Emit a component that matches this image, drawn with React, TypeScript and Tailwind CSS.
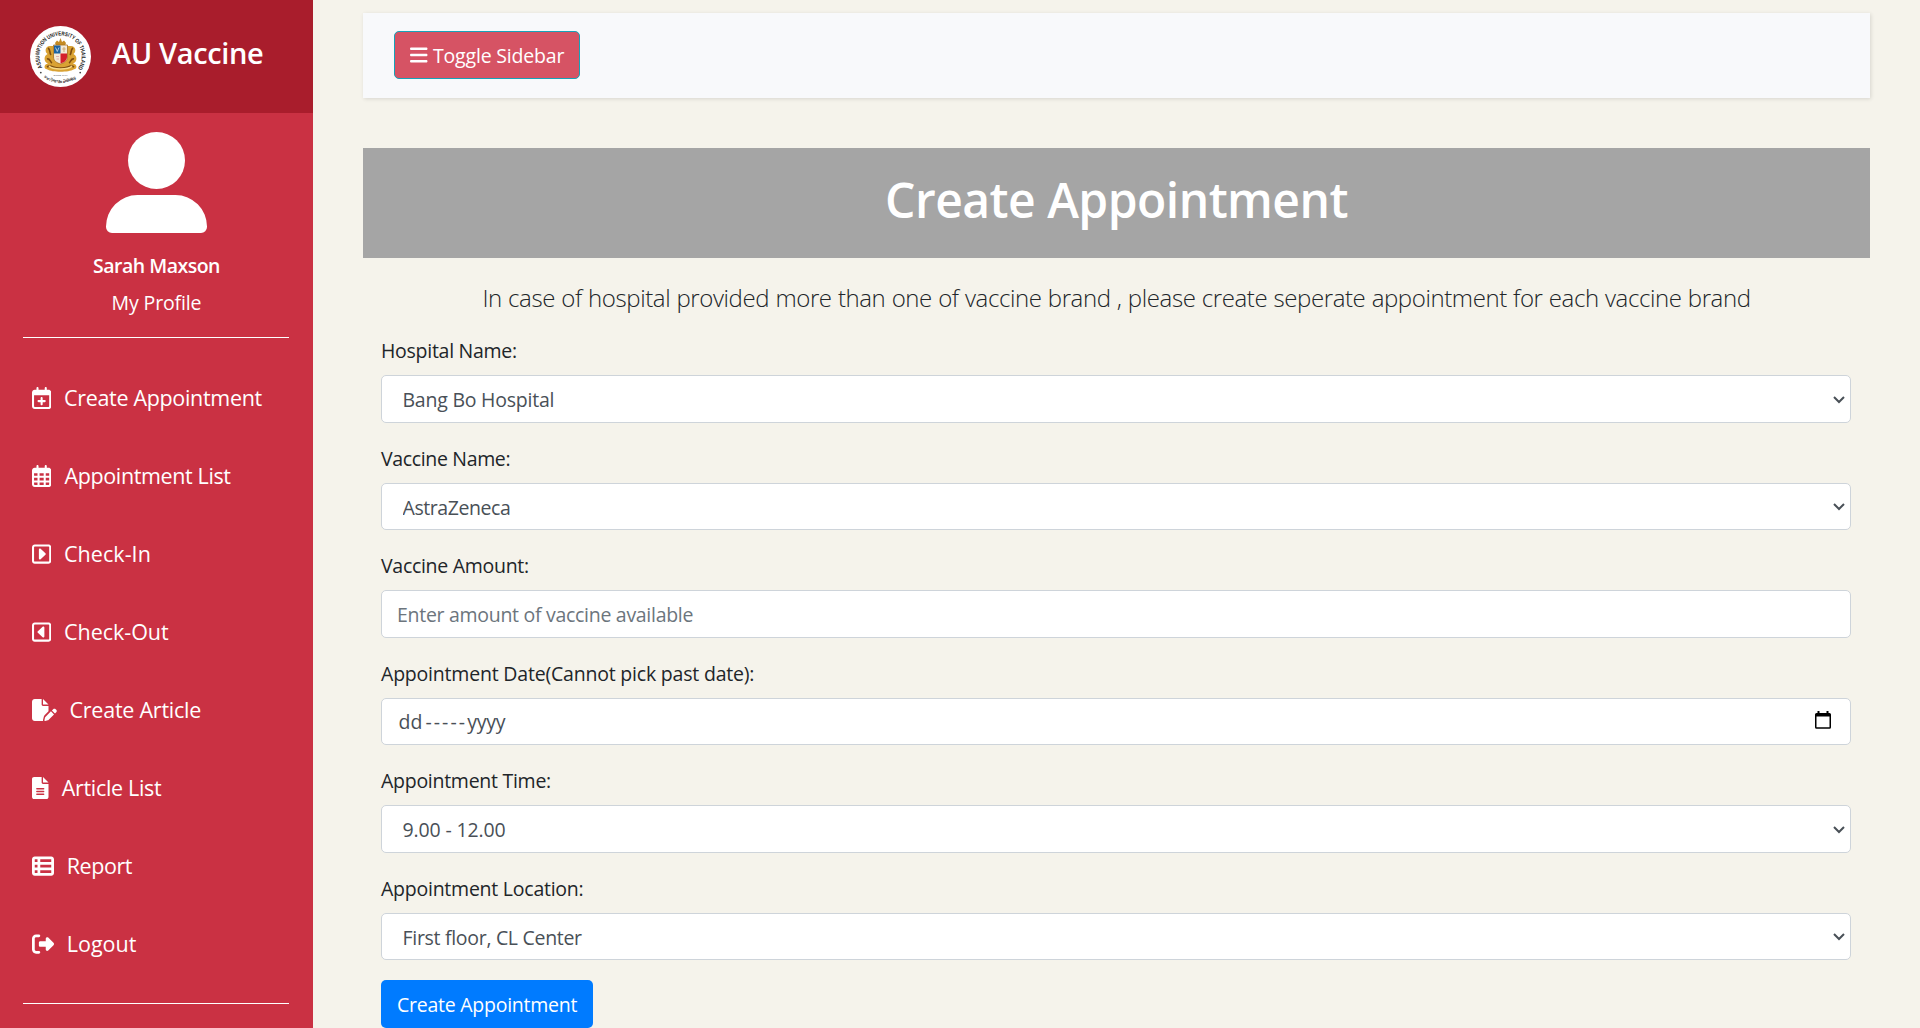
import type { ComponentType, ReactNode } from "react";
import {
  FaBars,
  FaFilePen,
  FaRegCalendarDays,
  FaRegCalendarPlus,
  FaRegSquareCaretLeft,
  FaRegSquareCaretRight,
  FaRightFromBracket,
  FaTableList,
} from "react-icons/fa6";

type NavItem = {
  label: string;
  icon: ComponentType<{ className?: string }>;
  iconWidth: string;
  tracking: string;
  gap: string;
};

function FileLines({ className }: { className?: string }) {
  return (
    <svg viewBox="0 0 384 512" className={className} fill="currentColor">
      <path d="M256 0v128h128L256 0z" />
      <path
        fillRule="evenodd"
        d="M224 128V0H48C21.5 0 0 21.5 0 48v416c0 26.5 21.5 48 48 48h288c26.500 0 48-21.500 48-48V160H256c-17.700 0-32-14.300-32-32z M112 256h160a16 16 0 0 1 0 32H112a16 16 0 0 1 0-32z M112 320h160a16 16 0 0 1 0 32H112a16 16 0 0 1 0-32z M112 384h160a16 16 0 0 1 0 32H112a16 16 0 0 1 0-32z"
      />
    </svg>
  );
}

const navItems: NavItem[] = [
  { label: "Create Appointment", icon: FaRegCalendarPlus, iconWidth: "w-[19.25px]", tracking: "tracking-[-0.32px]", gap: "gap-[12.75px]" },
  { label: "Appointment List", icon: FaRegCalendarDays, iconWidth: "w-[19.25px]", tracking: "tracking-[-0.37px]", gap: "gap-[13.25px]" },
  { label: "Check-In", icon: FaRegSquareCaretRight, iconWidth: "w-[19.25px]", tracking: "tracking-[0.05px]", gap: "gap-[12.75px]" },
  { label: "Check-Out", icon: FaRegSquareCaretLeft, iconWidth: "w-[19.25px]", tracking: "tracking-[-0.03px]", gap: "gap-[12.75px]" },
  { label: "Create Article", icon: FaFilePen, iconWidth: "w-[24.75px]", tracking: "tracking-[-0.24px]", gap: "gap-[12.75px]" },
  { label: "Article List", icon: FileLines, iconWidth: "w-[16.5px]", tracking: "tracking-[-0.32px]", gap: "gap-[13.25px]" },
  { label: "Report", icon: FaTableList, iconWidth: "w-[22px]", tracking: "tracking-[-0.44px]", gap: "gap-[12.75px]" },
  { label: "Logout", icon: FaRightFromBracket, iconWidth: "w-[22px]", tracking: "tracking-[0.01px]", gap: "gap-[12.75px]" },
];

function UniversitySeal() {
  return (
    <svg viewBox="0 0 61 61" className="mt-[26px] h-[61px] w-[61px] shrink-0">
      <defs>
        <path id="seal-top" d="M12.4 41.4 A21.1 21.1 0 1 1 48.6 41.4" />
        <path id="seal-bottom" d="M14.5 51.4 A26.4 26.4 0 0 0 46.5 51.4" />
      </defs>
      <circle cx="30.5" cy="30.5" r="30.5" fill="#fff" />
      <text fontFamily="Liberation Sans" fontWeight="700" fontSize="5.8" fill="#222">
        <textPath href="#seal-top" textLength="90" lengthAdjust="spacingAndGlyphs">
          ASSUMPTION UNIVERSITY OF THAILAND
        </textPath>
      </text>
      <text fontFamily="Liberation Sans, Noto Sans, sans-serif" fontWeight="700" fontSize="3.6" fill="#333">
        <textPath href="#seal-bottom" textLength="33" lengthAdjust="spacingAndGlyphs">
          มหาวิทยาลัยอัสสัมชัญ
        </textPath>
      </text>
      <circle cx="10.8" cy="46.6" r="0.9" fill="#444" />
      <circle cx="50.2" cy="46.6" r="0.9" fill="#444" />
      <path d="M25 17 L27 14.5 L29 16 L30.5 12 L32 16 L34 14.5 L36 17 L35 19.5 H26 Z" fill="#c58b22" />
      <path d="M20 20 C15 20 14.5 26 17.5 28 C13.5 30 13.5 36 18 37.5 C14 38 13 43 17.5 43.5 C22 46.5 39 46.5 43.5 43.5 C48 43 47 38 43 37.5 C47.5 36 47.5 30 43.5 28 C46.5 26 46 20 41 20 Z" fill="#d9a233" />
      <path d="M18 22 C21 24 19 27 21 29 M43 22 C40 24 42 27 40 29 M17 33 C20 32 20 36 22 37 M44 33 C41 32 41 36 39 37 M17 41 C21 38 24 43 30.5 42 C37 43 40 38 44 41" fill="none" stroke="#7d4d10" strokeWidth="1.6" />
      <path d="M19 40 C23 44 38 44 42 40" fill="none" stroke="#f6d987" strokeWidth="1.4" />
      <path d="M23.5 19 H37.5 V31 C37.5 35 34 37 30.5 38 C27 37 23.5 35 23.5 31 Z" fill="#f3ead9" stroke="#a8701c" strokeWidth="0.8" />
      <path d="M24 19.5 H30.5 V27.5 H24 Z" fill="#1d63a0" />
      <path d="M30.5 27.5 H37 V31 C37 34.5 34 36.5 30.5 37.5 Z" fill="#d5202c" />
      <path d="M25.5 21.5 L27.3 25.5 L29 21.5" fill="none" stroke="#cfe0ee" strokeWidth="0.8" />
      <path d="M34 21 V26 M32.3 23 H35.7" stroke="#c9a66b" strokeWidth="0.9" />
      <path d="M26 30.5 H29 M26.5 33 H29" stroke="#d9a0a0" strokeWidth="0.8" />
      <text x="30.5" y="50" textAnchor="middle" fontFamily="Liberation Sans" fontSize="2.4" fill="#555" textLength="14">
        SINCE 1969
      </text>
    </svg>
  );
}

function Avatar() {
  return (
    <svg viewBox="0 0 101 101" className="h-[101px] w-[101px]" fill="#fff">
      <circle cx="50.5" cy="28.5" r="28.5" />
      <path d="M31.5 63 H69.5 A31.5 31.5 0 0 1 101 94.5 V95 A6 6 0 0 1 95 101 H6 A6 6 0 0 1 0 95 V94.5 A31.5 31.5 0 0 1 31.5 63 Z" />
    </svg>
  );
}

function Sidebar() {
  return (
    <aside className="h-full w-[313px] shrink-0 bg-[#ca3143] text-white">
      <div className="flex h-[113px] items-start bg-[#a91d2c] pl-[30px]">
        <UniversitySeal />
        <h3 className="ml-[21px] mt-[33px] whitespace-nowrap text-[29px] font-semibold leading-[40px] tracking-[-0.38px]">
          AU Vaccine
        </h3>
      </div>
      <div className="flex flex-col items-center pt-[19px]">
        <Avatar />
        <p className="mt-[18px] text-[19.5px] font-semibold leading-[30px] tracking-[-0.5px]">Sarah Maxson</p>
        <p className="mt-[7px] text-[19.5px] leading-[30px] tracking-[-0.13px]">My Profile</p>
      </div>
      <div className="ml-[23px] mt-[19px] h-px w-[266px] bg-white" />
      <nav className="mt-[20px]">
        {navItems.map(({ label, icon: Icon, iconWidth, tracking, gap }) => (
          <a key={label} className={`flex h-[78px] items-center pl-[32px] pt-[1px] ${gap}`}>
            <Icon className={`h-[22px] shrink-0 ${iconWidth}`} />
            <span className={`whitespace-nowrap pt-[1px] text-[21.5px] ${tracking}`}>{label}</span>
          </a>
        ))}
      </nav>
      <div className="ml-[23px] mt-[21px] h-px w-[266px] bg-white" />
    </aside>
  );
}

const control =
  "h-[47.5px] w-full appearance-none rounded-[5px] border border-[#ced4da] bg-white text-[19.5px] text-[#495057] outline-none";

function Field({ label, tracking, children }: { label: string; tracking: string; children: ReactNode }) {
  return (
    <div className="mb-[20px]">
      <label className={`mb-[9px] block pt-[1px] text-[19.5px] leading-[30px] ${tracking}`}>{label}</label>
      <div className="relative">{children}</div>
    </div>
  );
}

function Select({ value, tracking }: { value: string; tracking: string }) {
  return (
    <>
      <select className={`${control} pl-[20.5px] pt-[2px] ${tracking}`} defaultValue={value}>
        <option>{value}</option>
      </select>
      <svg viewBox="0 0 12 8" className="absolute right-[6px] top-[20.5px] h-[8px] w-[12px]" fill="none" stroke="#495057" strokeWidth="2">
        <path d="M1 1 L6 6 L11 1" />
      </svg>
    </>
  );
}

function DateInput() {
  return (
    <>
      <div className={`${control} flex items-center pl-[16.5px] pt-[1px]`}>
        <span>dd</span>
        <span className="ml-[3px] tracking-[2.1px]">-----</span>
        <span className="tracking-[-0.25px]">yyyy</span>
      </div>
      <svg viewBox="0 0 16 18" className="absolute right-[20px] top-[13.5px] h-[18px] w-[16px]">
        <path d="M2.5 0 H4.5 V2 H11.5 V0 H13.5 V2 H14.5 A1.5 1.5 0 0 1 16 3.5 V16.3 A1.5 1.5 0 0 1 14.5 17.8 H1.5 A1.5 1.5 0 0 1 0 16.3 V3.5 A1.5 1.5 0 0 1 1.5 2 H2.5 Z M1.5 5.5 V16.3 H14.5 V5.5 Z" fillRule="evenodd" />
      </svg>
    </>
  );
}

export default function App() {
  return (
    <div className="flex h-[1028px] w-full overflow-hidden bg-[#f5f3eb] font-['Open_Sans',sans-serif] text-[#212529]">
      <Sidebar />
      <main className="ml-[50px] mr-[50px] mt-[13px] min-w-0 flex-1">
        <div className="h-[85px] bg-[#f8f9fb] pl-[31px] pt-[18px] shadow-[1px_1px_4px_rgba(0,0,0,0.12)]">
          <button className="flex h-[48px] w-[186px] items-center rounded-[5px] border border-[#17a2b8] bg-[#d65364] pl-[15px] text-[19.5px] text-white">
            <FaBars className="h-[20px] w-[17.5px]" />
            <span className="ml-[5.5px] whitespace-nowrap pt-[2px] tracking-[-0.18px]">Toggle Sidebar</span>
          </button>
        </div>
        <h1 className="mt-[50px] flex h-[110px] items-center justify-center bg-[#a5a5a5] pb-[6px] text-[48px] font-semibold tracking-[-0.53px] text-white">
          Create Appointment
        </h1>
        <p className="mt-[21px] whitespace-nowrap text-center text-[24px] font-light leading-[37px] tracking-[-0.4px] [word-spacing:0.45px]">
          In case of hospital provided more than one of vaccine brand , please create seperate appointment for each
          vaccine brand
        </p>
        <form className="mt-[19.25px] pl-[18px] pr-[19px]">
          <Field label="Hospital Name:" tracking="tracking-[-0.27px]">
            <Select value="Bang Bo Hospital" tracking="tracking-[-0.23px]" />
          </Field>
          <Field label="Vaccine Name:" tracking="tracking-[-0.34px]">
            <Select value="AstraZeneca" tracking="tracking-[-0.42px]" />
          </Field>
          <Field label="Vaccine Amount:" tracking="tracking-[-0.29px]">
            <input
              className={`${control} block pl-[15px] pt-[1px] tracking-[-0.29px] placeholder:text-[#6c757d]`}
              placeholder="Enter amount of vaccine available"
            />
          </Field>
          <Field label="Appointment Date(Cannot pick past date):" tracking="tracking-[-0.2px]">
            <DateInput />
          </Field>
          <Field label="Appointment Time:" tracking="tracking-[-0.27px]">
            <Select value="9.00 - 12.00" tracking="tracking-[-0.14px]" />
          </Field>
          <Field label="Appointment Location:" tracking="tracking-[-0.24px]">
            <Select value="First floor, CL Center" tracking="tracking-[-0.3px]" />
          </Field>
          <button
            type="button"
            className="flex h-[48px] w-[212px] items-center whitespace-nowrap rounded-[5px] bg-[#007bff] pl-[16px] text-[19.5px] tracking-[-0.25px] text-white"
          >
            <span className="pt-[1px]">Create Appointment</span>
          </button>
        </form>
      </main>
    </div>
  );
}
